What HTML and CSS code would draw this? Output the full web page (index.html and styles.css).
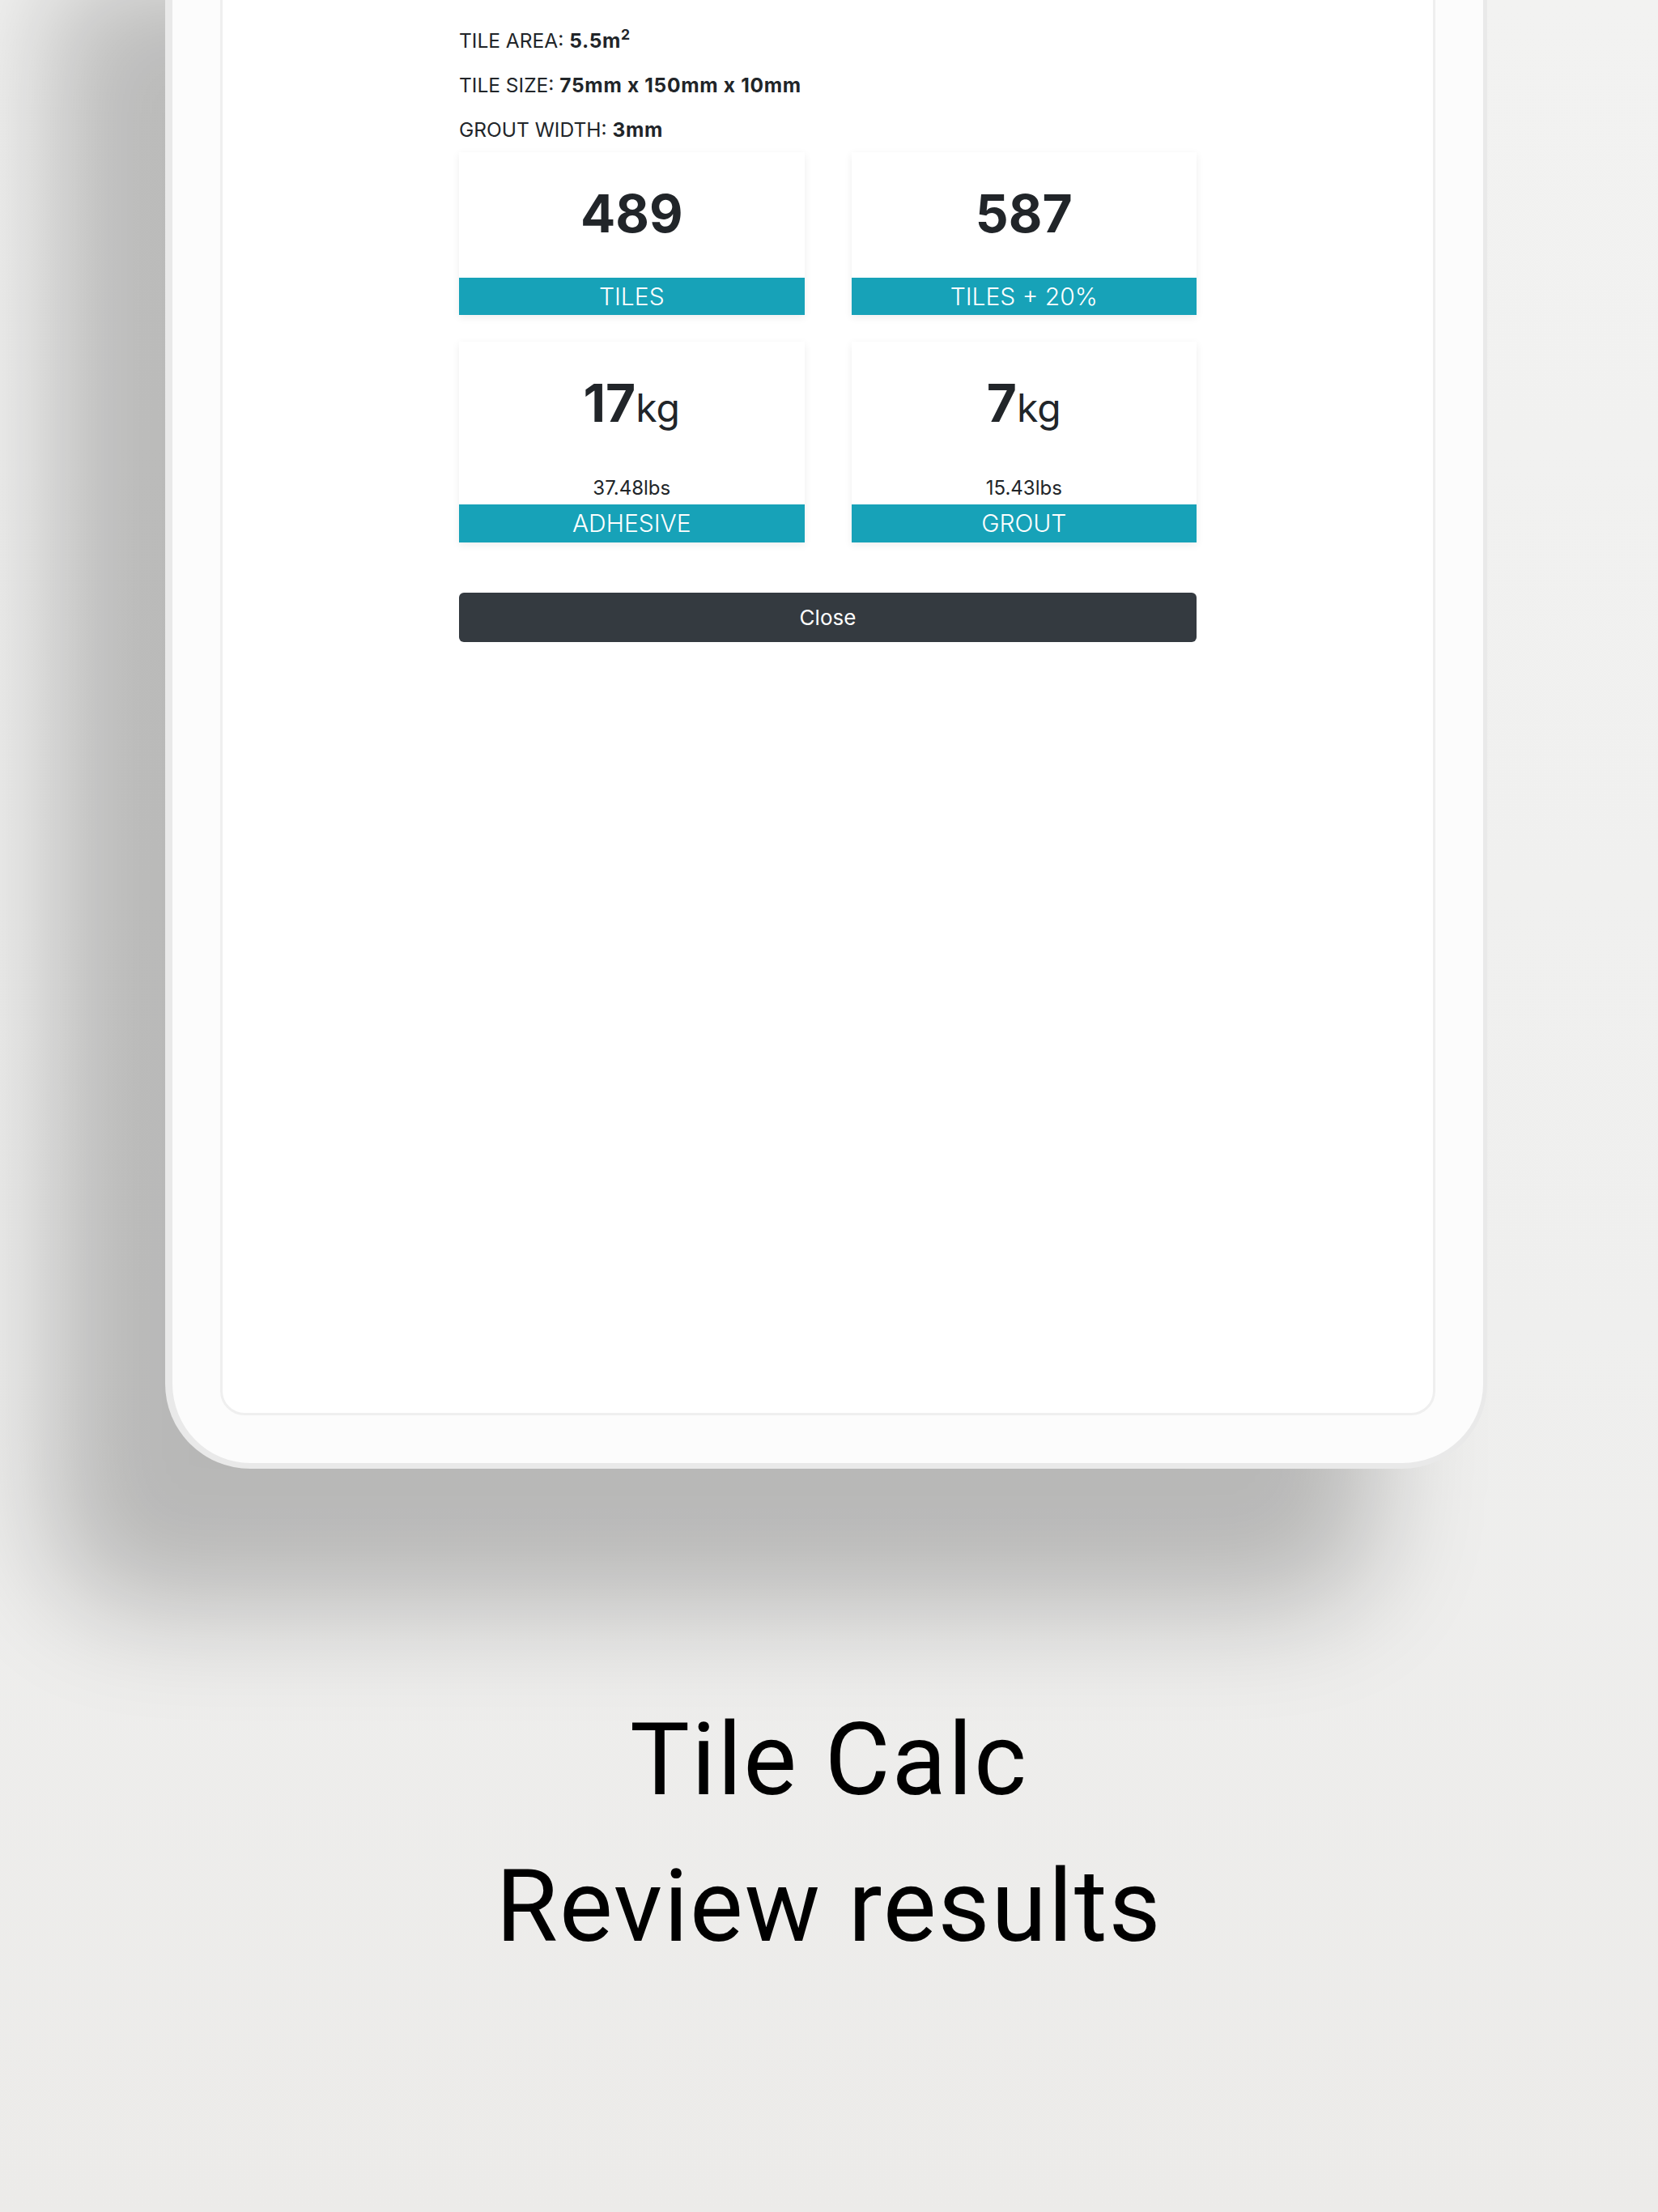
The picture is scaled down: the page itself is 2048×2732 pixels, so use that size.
FILE: index.html
```html
<!DOCTYPE html>
<html lang="en">
<head>
<meta charset="utf-8">
<title>Tile Calc - Review results</title>
<link rel="stylesheet" href="styles.css">
</head>
<body>
<main class="stage">
  <div class="device">
    <div class="screen">
      <div class="results">
        <div class="info">
          <p class="info-line">TILE AREA: <b>5.5m<sup>2</sup></b></p>
          <p class="info-line">TILE SIZE: <b>75mm x 150mm x 10mm</b></p>
          <p class="info-line">GROUT WIDTH: <b>3mm</b></p>
        </div>
        <div class="grid">
          <div class="card">
            <div class="card-body">
              <div class="value">489</div>
            </div>
            <div class="band">TILES</div>
          </div>
          <div class="card">
            <div class="card-body">
              <div class="value">587</div>
            </div>
            <div class="band">TILES + 20%</div>
          </div>
          <div class="card">
            <div class="card-body card-body-weight">
              <div class="value">17<span class="unit">kg</span></div>
              <div class="lbs">37.48lbs</div>
            </div>
            <div class="band">ADHESIVE</div>
          </div>
          <div class="card">
            <div class="card-body card-body-weight">
              <div class="value">7<span class="unit">kg</span></div>
              <div class="lbs">15.43lbs</div>
            </div>
            <div class="band">GROUT</div>
          </div>
        </div>
        <button class="close-btn" type="button">Close</button>
      </div>
    </div>
  </div>
  <section class="caption">
    <h1 class="caption-title">Tile Calc</h1>
    <h2 class="caption-sub">Review results</h2>
  </section>
</main>
</body>
</html>
```
FILE: styles.css
```css
html, body {
  margin: 0;
  padding: 0;
}
body {
  width: 2048px;
  height: 2732px;
  overflow: hidden;
  background: linear-gradient(180deg, #f2f2f1 0%, #efefee 60%, #ecebe9 100%);
  font-family: Inter, "Noto Sans", "Liberation Sans", sans-serif;
  color: #212529;
}
.stage {
  display: flow-root;
}
.device {
  box-sizing: border-box;
  margin: -200px 0 0 204px;
  width: 1633px;
  height: 2014px;
  background: #fcfcfc;
  border-style: solid;
  border-color: #e9e9e9;
  border-width: 0 5px 7px 9px;
  border-radius: 0 0 105px 105px;
  padding: 59px 59px 59px 59px;
  display: flex;
  flex-direction: column;
  box-shadow: -140px 170px 140px rgba(0, 0, 0, 0.23);
}
.screen {
  flex: 1;
  background: #ffffff;
  border: 3px solid #efefef;
  border-radius: 30px;
  padding-top: 170.4px;
}
.results {
  width: 911px;
  margin: 0 auto;
}
.info {
  display: flex;
  flex-direction: column;
  gap: 18.6px;
}
.info-line {
  margin: 0;
  font-size: 24.5px;
  line-height: 36px;
  color: #212529;
}
.info-line b {
  font-weight: 700;
  letter-spacing: 0.7px;
}
.info-line sup {
  font-size: 0.72em;
  line-height: 0;
  vertical-align: 0.55em;
}
.grid {
  margin-top: 10.7px;
  display: grid;
  grid-template-columns: 1fr 1fr;
  column-gap: 58px;
  row-gap: 32.4px;
}
.card {
  background: #ffffff;
  display: flex;
  flex-direction: column;
  box-shadow: 0 3px 10px rgba(0, 0, 0, 0.07);
}
.card-body {
  padding: 38.2px 0 39.4px;
  text-align: center;
}
.card-body-weight {
  padding: 38.8px 0 2.7px;
}
.value {
  font-size: 64px;
  line-height: 76.8px;
  height: 76.8px;
  font-weight: 700;
  color: #212529;
}
.unit {
  font-size: 48px;
  font-weight: 400;
  line-height: 1;
}
.lbs {
  margin-top: 48.8px;
  font-size: 24px;
  line-height: 34.5px;
  color: #212529;
}
.band {
  background: #17a2b8;
  color: #ffffff;
  text-align: center;
  font-size: 30px;
  font-weight: 300;
  line-height: 46.6px;
  height: 46.6px;
}
.close-btn {
  display: block;
  width: 100%;
  margin-top: 62.4px;
  height: 60.6px;
  border: 0;
  border-radius: 6px;
  background: #343a40;
  color: #ffffff;
  font-family: Inter, "Noto Sans", "Liberation Sans", sans-serif;
  font-size: 26px;
  font-weight: 400;
  padding: 0;
}
.caption {
  margin-top: 268.8px;
  text-align: center;
  font-family: Roboto, "Liberation Sans", sans-serif;
  color: #000000;
}
.caption-title,
.caption-sub {
  margin: 0;
  font-size: 124px;
  line-height: 181px;
  font-weight: 400;
  letter-spacing: 2px;
}
```
